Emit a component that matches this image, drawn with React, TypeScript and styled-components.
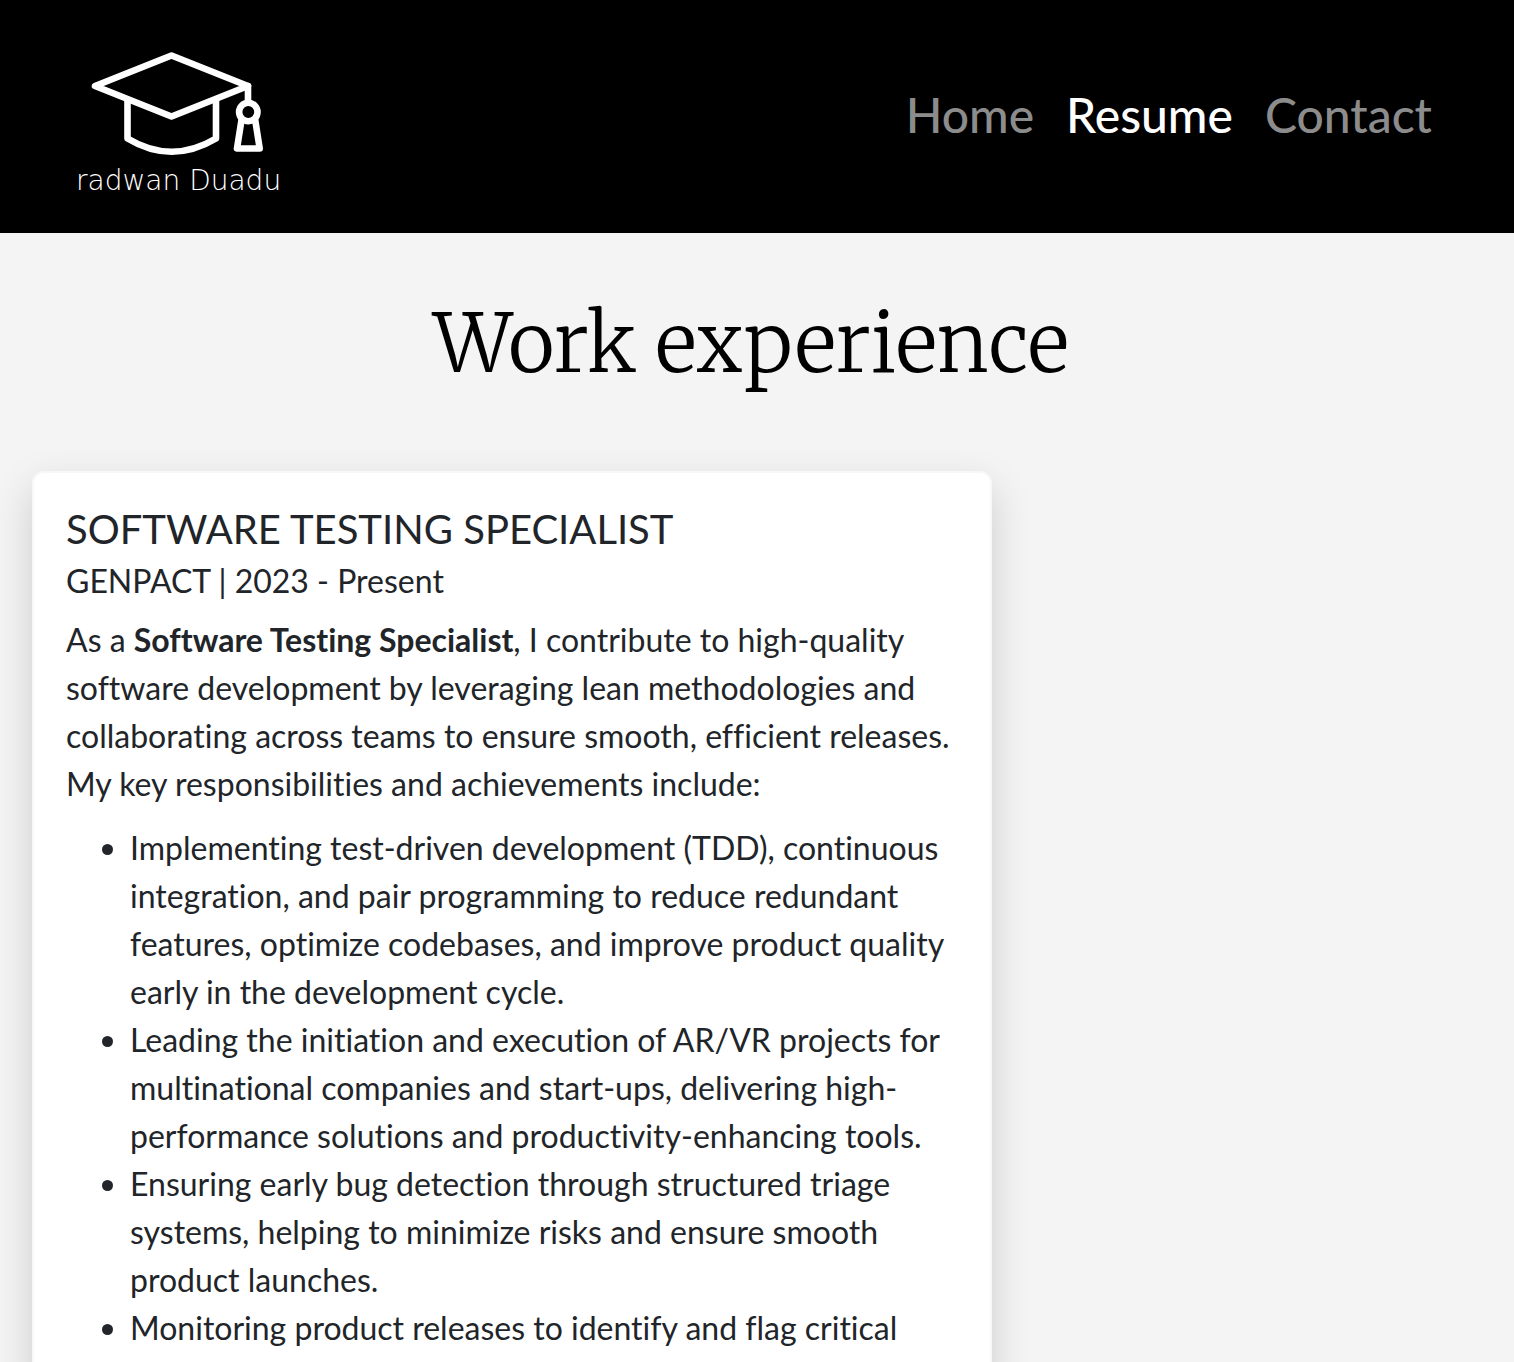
import React from "react";
import styled, { createGlobalStyle } from "styled-components";

const GlobalStyle = createGlobalStyle`
  *, *::before, *::after { box-sizing: border-box; }
  body {
    margin: 0;
    background: #f4f4f4;
    color: #212529;
    font-family: Lato, "Open Sans", sans-serif;
    font-size: 32px;
    line-height: 48px;
    font-variant-ligatures: none;
  }
`;

const Header = styled.header`
  display: flex;
  align-items: center;
  justify-content: space-between;
  padding: 36px 82px 39px 76px;
  background: #000;
`;

const Brand = styled.a`
  display: flex;
  flex-direction: column;
  align-items: center;
  gap: 8px;
  padding-top: 12px;
  color: #fff;
  text-decoration: none;
`;

const BrandName = styled.span`
  font-family: "DejaVu Sans", sans-serif;
  font-weight: 200;
  font-size: 28px;
  line-height: 26px;
  white-space: nowrap;
`;

const Nav = styled.nav`
  display: flex;
  gap: 32px;
`;

const NavLink = styled.a<{ $active?: boolean }>`
  color: ${({ $active }) => ($active ? "#fff" : "#8c8c8c")};
  font-size: 48px;
  font-weight: 500;
  line-height: 72px;
  text-decoration: none;
`;

const PageTitle = styled.h1`
  margin: 0;
  padding: 64px 44px 80px 32px;
  color: #000;
  font-family: Merriweather, "DejaVu Serif Condensed", "DejaVu Serif", serif;
  font-size: 80px;
  font-weight: 300;
  line-height: 94px;
  text-align: center;
`;

const Experience = styled.main`
  padding: 0 32px 32px;
`;

const Card = styled.article`
  max-width: 960px;
  padding: 32px;
  background: #fff;
  border: 2px solid #f8f8f8;
  border-radius: 12px;
  box-shadow: 0 16px 40px rgba(0, 0, 0, 0.16);
`;

const JobTitle = styled.h2`
  margin: 0 0 8px;
  font-size: 40px;
  font-weight: 400;
  line-height: 48px;
`;

const JobMeta = styled.h3`
  margin: 0 0 16px;
  font-size: 32px;
  font-weight: 400;
  line-height: 39px;
`;

const Summary = styled.p`
  margin: 0 0 16px;
`;

const Duties = styled.ul`
  margin: 0;
  padding-left: 64px;
`;

const duties = [
  "Implementing test-driven development (TDD), continuous integration, and pair programming to reduce redundant features, optimize codebases, and improve product quality early in the development cycle.",
  "Leading the initiation and execution of AR/VR projects for multinational companies and start-ups, delivering high-performance solutions and productivity-enhancing tools.",
  "Ensuring early bug detection through structured triage systems, helping to minimize risks and ensure smooth product launches.",
  "Monitoring product releases to identify and flag critical",
];

function GraduationCap() {
  return (
    <svg width="180" height="112" viewBox="89 48 180 112" fill="none" stroke="#fff" strokeWidth="6.6" strokeLinejoin="round" strokeLinecap="round" aria-hidden="true">
      <path d="M95 86 171.500 55.500 248 86 171.500 116.500Z" />
      <path d="M127.500 100V138.500Q171.500 165 216 138.500V100" />
      <path d="M248 86V102" />
      <circle cx="248.300" cy="112" r="9.200" />
      <path d="M241.500 120 237 148.500H259.700L255.200 120" />
    </svg>
  );
}

export default function App() {
  return (
    <>
      <GlobalStyle />
      <Header>
        <Brand href="#home">
          <GraduationCap />
          <BrandName>radwan Duadu</BrandName>
        </Brand>
        <Nav aria-label="Main">
          <NavLink href="#home">Home</NavLink>
          <NavLink href="#resume" $active aria-current="page">Resume</NavLink>
          <NavLink href="#contact">Contact</NavLink>
        </Nav>
      </Header>
      <PageTitle>Work experience</PageTitle>
      <Experience>
        <Card>
          <JobTitle>SOFTWARE TESTING SPECIALIST</JobTitle>
          <JobMeta>GENPACT | 2023 - Present</JobMeta>
          <Summary>
            As a <strong>Software Testing Specialist</strong>, I contribute to high-quality software
            development by leveraging lean methodologies and collaborating across teams to ensure
            smooth, efficient releases. My key responsibilities and achievements include:
          </Summary>
          <Duties>
            {duties.map((duty) => (
              <li key={duty}>{duty}</li>
            ))}
          </Duties>
        </Card>
      </Experience>
    </>
  );
}
